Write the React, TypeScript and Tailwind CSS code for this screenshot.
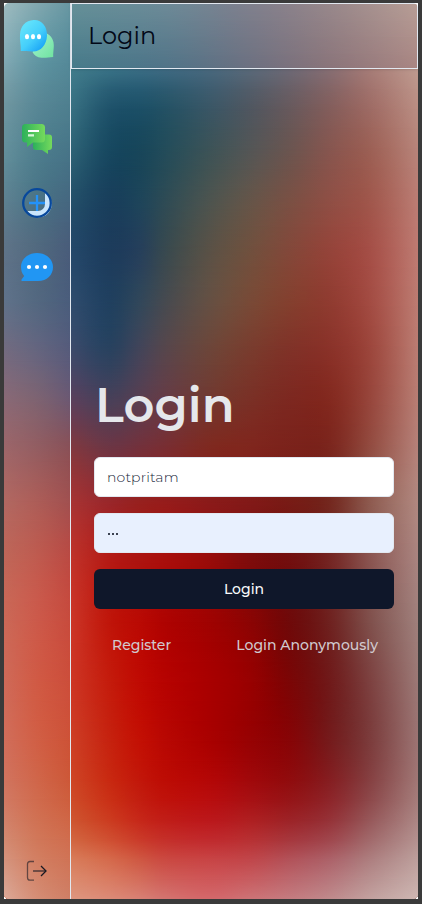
type MeshRow = { y: number; colors: string };
type MeshData = { xs: number[]; rows: MeshRow[] };

const mainMesh: MeshData = {
  xs: [71, 110, 140, 165, 210, 250, 290, 330, 370, 418],
  rows: [
    { y: 69, colors: "417c8b 3a7387 3b6e85 3f6b83 49697e 5a6a7a 6e6a76 876f74 a67d78 bf9b90" },
    { y: 100, colors: "3a7384 22566e 1f536b 265468 3b5869 505863 685b60 83605f 9f6e68 bb9085" },
    { y: 150, colors: "2e6376 174860 18465a 234c5a 3d5357 545656 6b5550 87564f 9c6055 b8847a" },
    { y: 200, colors: "24506a 193f5c 1e455a 2e4b55 4d544f 655549 7a5044 8f4f45 a0574c bb7d74" },
    { y: 250, colors: "24486a 1d3c5c 263f5b 38494f 5a5146 70503e 83483a 95443a a54f47 be7b72" },
    { y: 300, colors: "2f4c6d 20405f 31475a 464a50 655043 784a37 84402f 903c31 a34c43 bd7c72" },
    { y: 350, colors: "3d4a6a 29425f 434459 57464c 6d4539 793c2e 803228 8a3229 9c463c bb7d73" },
    { y: 400, colors: "5b405c 494059 5a3e50 673b45 723830 7a3026 7d2820 83291f 97463c b87e74" },
    { y: 450, colors: "83383e 6f3543 75303a 7a2d31 80281f 80251d 7b221b 7b261e 924c41 b5827a" },
    { y: 500, colors: "a63434 98272b 96211f 951d1c 8a1b1a 821a18 781c16 74281f 8e5a4f b18880" },
    { y: 560, colors: "c0332a b41a15 ac1410 a90f0c 980c0a 7e0c0c 720f0f 742523 8a5450 a98480" },
    { y: 620, colors: "cb3628 bf150a b90a04 ae0402 9f0302 8b0504 6f0a0a 6f2220 80504c a0807c" },
    { y: 680, colors: "cd3625 c41b0c bf0a03 b60301 a80000 980101 7b0606 701a1a 7d4140 9c7976" },
    { y: 740, colors: "cd3f26 c6220f c31004 b80803 a90100 970203 870507 751b1c 7c3c3c 9c7473" },
    { y: 790, colors: "ce4827 c92c13 c21a0d be0f07 b60a0a a40c0f 931012 8a2125 8a4446 a37a78" },
    { y: 830, colors: "cf5c36 cd4327 c82f20 c22520 bd1f23 b32729 a12c31 9a3b41 9c6062 b08c8a" },
    { y: 860, colors: "d87d5b d56a4c cf5843 cb4a42 c84546 c1474b b3535a ad636a ae7f80 bda09d" },
    { y: 899, colors: "dd967f dc8a77 d88074 d47470 d4686b cd7376 c57c80 c08a8c c3a19f ceb6b2" },
  ],
};

const sideMesh: MeshData = {
  xs: [4, 37, 70],
  rows: [
    { y: 3, colors: "9ebbbf 82a8b0 6897a2" },
    { y: 50, colors: "87aeb8 659aa6 578c9b" },
    { y: 100, colors: "7298a2 5a8997 4f8090" },
    { y: 150, colors: "64909c 4f7f8e 477588" },
    { y: 200, colors: "5e8191 4b7386 456780" },
    { y: 250, colors: "5f7388 52697f 495c7a" },
    { y: 300, colors: "60728a 536880 4a5d7c" },
    { y: 350, colors: "736b80 65657f 565b7b" },
    { y: 400, colors: "8a6976 7e6371 6c5872" },
    { y: 450, colors: "9e6669 945d61 8b5056" },
    { y: 500, colors: "b16862 ac5d58 a05050" },
    { y: 550, colors: "be6659 bd5b50 b84a44" },
    { y: 600, colors: "c96857 ca5a4c c54a3e" },
    { y: 700, colors: "d06b59 d15b44 cd4f3a" },
    { y: 780, colors: "d1745f d0664a cd5838" },
    { y: 840, colors: "d38a72 d1785a d06d4e" },
    { y: 899, colors: "dba998 d58e76 cf7f66" },
  ],
};

const headMesh: MeshData = {
  xs: [71, 165, 250, 330, 418],
  rows: [
    { y: 3, colors: "659098 6d8a97 80808d 98888b b89e96" },
    { y: 69, colors: "467a8a 507387 6c7080 8a747a a98582" },
  ],
};

/* Cubic Hermite interpolation of a list of vectors at position p. */
function sample(ps: number[], vs: number[][], p: number): number[] {
  const n = ps.length;
  let i = 0;
  while (i < n - 2 && p > ps[i + 1]) i++;
  const h = ps[i + 1] - ps[i];
  const t = (p - ps[i]) / h;
  return vs[i].map((_, k) => {
    const slope = (a: number) => {
      const lo = Math.max(0, a - 1);
      const hi = Math.min(n - 1, a + 1);
      return (vs[hi][k] - vs[lo][k]) / (ps[hi] - ps[lo]);
    };
    return (
      (2 * t ** 3 - 3 * t ** 2 + 1) * vs[i][k] +
      (t ** 3 - 2 * t ** 2 + t) * h * slope(i) +
      (3 * t ** 2 - 2 * t ** 3) * vs[i + 1][k] +
      (t ** 3 - t ** 2) * h * slope(i + 1)
    );
  });
}

function steps(from: number, to: number, size: number): number[] {
  const count = Math.ceil((to - from) / size);
  return Array.from({ length: count + 1 }, (_, i) => from + ((to - from) * i) / count);
}

/* Each layer is a horizontal gradient faded in over the layer above it. */
function Mesh({ mesh }: { mesh: MeshData }) {
  const { xs, rows } = mesh;
  const x0 = xs[0];
  const y0 = rows[0].y;
  const ys = rows.map((r) => r.y);
  const cols = steps(x0, xs[xs.length - 1], 10);
  const lines = steps(y0, ys[ys.length - 1], 20);
  const grid = rows.map((row) => {
    const rgb = row.colors
      .split(" ")
      .map((c) => [0, 2, 4].map((k) => parseInt(c.slice(k, k + 2), 16)));
    return cols.flatMap((x) => sample(xs, rgb, x));
  });
  return (
    <div className="absolute inset-0 overflow-hidden">
      {lines.map((y, i) => {
        const v = sample(ys, grid, y).map((n) => Math.min(255, Math.max(0, n)).toFixed(1));
        const stops = cols.map(
          (x, k) => `rgb(${v[3 * k]} ${v[3 * k + 1]} ${v[3 * k + 2]}) ${x - x0}px`,
        );
        const mask =
          i === 0
            ? undefined
            : `linear-gradient(to bottom, transparent ${lines[i - 1] - y0}px, black ${y - y0}px)`;
        return (
          <div
            key={y}
            className="absolute inset-0"
            style={{ backgroundImage: `linear-gradient(to right, ${stops.join(", ")})`, maskImage: mask }}
          />
        );
      })}
    </div>
  );
}

function Logo() {
  return (
    <svg className="h-[40px] w-[36px]" viewBox="0 0 36 40">
      <defs>
        <linearGradient id="logoBlue" x1="0.2" y1="0.2" x2="0.9" y2="1">
          <stop offset="0" stopColor="#5fe0fb" />
          <stop offset="0.45" stopColor="#45cffb" />
          <stop offset="1" stopColor="#119bf5" />
        </linearGradient>
        <linearGradient id="logoGreen" x1="0" y1="0" x2="1" y2="1">
          <stop offset="0" stopColor="#a5f3cf" />
          <stop offset="1" stopColor="#6fe3a0" />
        </linearGradient>
      </defs>
      <path d="M27 14C33 17 35 22 34.800 27C34.700 31 34 34 34.200 38C30 38.300 27 39 22.500 38.800C18 38.500 15 36 13.500 33Z" fill="url(#logoGreen)" />
      <path d="M14.500 1C23 .5 28.500 8 28 17C27.500 26 21.500 33 13.500 32.500C9 32.200 5 32 1.800 32C2 26 .5 21 1 15.500C1.500 7 6.500 1.500 14.500 1Z" fill="url(#logoBlue)" />
      <ellipse cx="8" cy="17.700" rx="2.100" ry="2.600" fill="#fff" />
      <ellipse cx="14" cy="17.700" rx="2.100" ry="2.600" fill="#fff" />
      <ellipse cx="20" cy="17.700" rx="2.100" ry="2.600" fill="#fff" />
    </svg>
  );
}

function ChatsIcon() {
  return (
    <svg className="h-[32px] w-[32px]" viewBox="0 0 32 32">
      <defs>
        <linearGradient id="chatGreen">
          <stop offset="0" stopColor="#2cb05b" />
          <stop offset="1" stopColor="#75da5c" />
        </linearGradient>
      </defs>
      <path d="M15 11.500H28A3 3 0 0 1 31 14.500V24A3 3 0 0 1 28 27H27V31L21 27H15A3 3 0 0 1 12 24V14.500A3 3 0 0 1 15 11.500Z" fill="url(#chatGreen)" />
      <path d="M4.500 1H20.500A3.500 3.500 0 0 1 24 4.500V16A3.500 3.500 0 0 1 20.500 19.500H12L6 24V19.500H4.500A3.500 3.500 0 0 1 1 16V4.500A3.500 3.500 0 0 1 4.500 1Z" fill="url(#chatGreen)" />
      <path d="M7 7H18V9H7Z" fill="#fff" />
      <path d="M7 11.300H13V13.500H7Z" fill="#d7f5d8" />
    </svg>
  );
}

function AddIcon() {
  return (
    <svg className="h-[32px] w-[32px]" viewBox="0 0 32 32">
      <path d="M24 6A13 13 0 1 1 6.500 24H17A7 7 0 0 0 24 17Z" fill="#c9e5fc" />
      <circle cx="16" cy="16" r="13.800" fill="none" stroke="#07489c" strokeWidth="2.300" />
      <path d="M16 8V24M8 16H24" fill="none" stroke="#2492f8" strokeWidth="2.300" />
    </svg>
  );
}

function MessageIcon() {
  return (
    <svg className="h-[30px] w-[34px]" viewBox="0 0 34 30">
      <path d="M17 1C26 1 33 7 33 15C33 23 27 29 18 29H1.500V27.500L4.200 24C2 21.500 1 18.500 1 15C1 7 8 1 17 1Z" fill="#2196f3" />
      <circle cx="9" cy="15" r="2.100" fill="#fff" />
      <circle cx="17" cy="15" r="2.100" fill="#fff" />
      <circle cx="25" cy="15" r="2.100" fill="#fff" />
    </svg>
  );
}

function ExitIcon() {
  return (
    <svg className="h-[22px] w-[22px]" viewBox="0 0 22 22" fill="none" stroke="#171923" strokeWidth="1.300">
      <path d="M8 1.500H4Q1.500 1.500 1.500 4V17.500Q1.500 20.200 4 20.200H8" opacity=".6" />
      <path d="M7 11H20" opacity=".7" />
      <path d="M15 6L20 11L15 16" />
    </svg>
  );
}

export default function App() {
  return (
    <div className="h-[904px] w-[422px] bg-[#3a3a3a] pl-[4px] pt-[3px] font-['Montserrat','Inter',sans-serif]">
      <div className="h-[896px] w-[414px] bg-white">
        <div className="flex h-full w-full overflow-hidden rounded-[5px]">
          <aside className="relative w-[67px] shrink-0 border-r border-[#e2e8f0]">
            <Mesh mesh={sideMesh} />
            <div className="relative flex h-full flex-col items-center">
              <div className="mt-[16px]">
                <Logo />
              </div>
              <nav className="mt-[64px] flex flex-col items-center gap-[32px]">
                <ChatsIcon />
                <AddIcon />
                <div className="pt-px">
                  <MessageIcon />
                </div>
              </nav>
              <div className="mb-[17px] mt-auto">
                <ExitIcon />
              </div>
            </div>
          </aside>
          <main className="flex min-w-0 flex-1 flex-col">
            <header className="relative z-10 h-[66px] shrink-0 rounded-tr-[4px] border border-[#e2e8f0] shadow-sm">
              <Mesh mesh={headMesh} />
              <div className="relative flex h-full items-center pl-[16px] text-2xl text-[#020817]">
                Login
              </div>
            </header>
            <section className="relative flex-1">
              <Mesh mesh={mainMesh} />
              <div className="relative flex flex-col pl-[23px] pr-[24px] pt-[306px]">
                <h1 className="h-[82px] pl-px text-5xl font-semibold leading-[60px] text-[#e5e7eb]">
                  Login
                </h1>
                <div className="flex flex-col gap-4">
                  <input
                    className="h-10 w-full rounded-md border border-[#e2e8f0] bg-white px-3 text-sm font-light tracking-[0.150px] text-[#20283a] outline-none"
                    defaultValue="notpritam"
                  />
                  <div className="flex h-10 w-full items-center gap-[2px] rounded-md border border-[#e2e8f0] bg-[#e8f0fe] px-[13px] pt-[2px]">
                    <span className="size-[2px] rounded-full bg-[#020817]" />
                    <span className="size-[2px] rounded-full bg-[#020817]" />
                    <span className="size-[2px] rounded-full bg-[#020817]" />
                  </div>
                  <button className="h-10 w-full rounded-md bg-[#0f172a] text-sm font-medium text-[#f8fafc]">
                    Login
                  </button>
                  <div className="flex h-10 items-center justify-between pl-[18px] pr-[16px] text-sm font-medium text-[#d1c9ce]">
                    <button>Register</button>
                    <button>Login Anonymously</button>
                  </div>
                </div>
              </div>
            </section>
          </main>
        </div>
      </div>
    </div>
  );
}
